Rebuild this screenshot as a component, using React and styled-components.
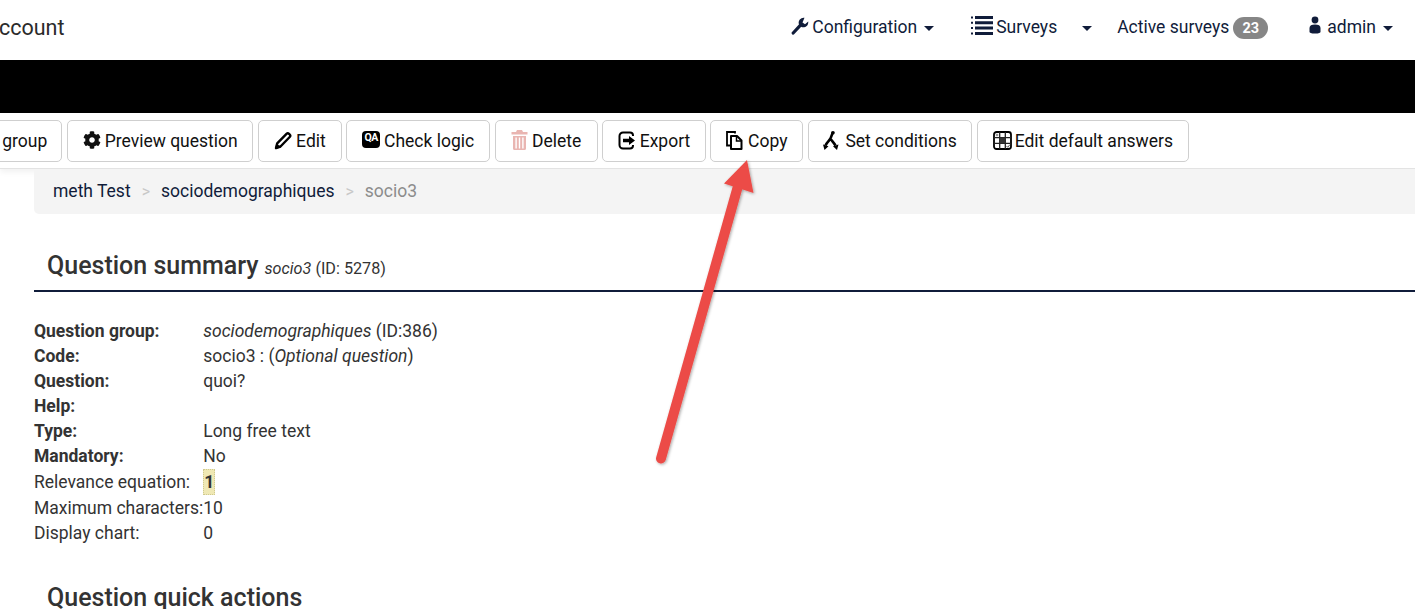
import React from 'react'
import styled, { createGlobalStyle } from 'styled-components'
import { FaCog } from 'react-icons/fa'

const navy = '#101c3a'

const GlobalStyle = createGlobalStyle`
  html, body {
    margin: 0;
    padding: 0;
    background: #fff;
    font-family: Roboto, "Liberation Sans", sans-serif;
  }
`

const Page = styled.div`
  position: relative;
  width: 1415px;
  height: 609px;
  overflow: hidden;
  background: #fff;
`

const TopNav = styled.nav`
  height: 60px;
  box-sizing: border-box;
  padding-bottom: 6px;
  display: flex;
  align-items: center;
  justify-content: space-between;
  color: ${navy};
  font-size: 17.5px;
`

const Brand = styled.div`
  font-size: 21.5px;
  margin-left: -1px;
  color: #2b2b2b;
`

const NavItems = styled.div`
  display: flex;
  align-items: center;
  padding-right: 22px;
`

const NavItem = styled.div`
  display: flex;
  align-items: center;
  margin-left: ${p => p.$gap}px;
  height: 24px;
  svg { flex: none; }
`

const NavIcon = styled.span`
  display: flex;
  margin-right: ${p => p.$gap}px;
  margin-top: ${p => p.$up}px;
`

const Caret = styled.span`
  width: 0;
  height: 0;
  margin-left: ${p => p.$gap || 7}px;
  margin-top: 2px;
  border-left: 5px solid transparent;
  border-right: 5px solid transparent;
  border-top: 5px solid ${navy};
`

const Badge = styled.span`
  margin-left: 4px;
  width: 35px;
  height: 22px;
  margin-top: 2px;
  border-radius: 11px;
  background: #868686;
  color: #fff;
  font-size: 14.5px;
  font-weight: 700;
  display: flex;
  align-items: center;
  justify-content: center;
`

const BlackBar = styled.div`
  height: 53px;
  background: #000;
`

const Toolbar = styled.div`
  height: 56px;
  box-sizing: border-box;
  padding-top: 7px;
  display: flex;
  align-items: flex-start;
  gap: 4.6px;
  border-bottom: 1px solid #e3e3e3;
  box-shadow: 0 3px 6px rgba(0, 0, 0, 0.06);
`

const Button = styled.button`
  height: 42px;
  box-sizing: border-box;
  width: ${p => p.$w}px;
  margin-left: ${p => p.$ml || 0}px;
  flex: none;
  display: flex;
  align-items: center;
  justify-content: ${p => (p.$end ? 'flex-end' : 'center')};
  gap: ${p => p.$gap ?? 4}px;
  padding: 0 ${p => (p.$end ? 14 : 0)}px 0 0;
  background: #fff;
  border: 1px solid #cfcfcf;
  border-radius: 5px;
  color: #111;
  font-family: inherit;
  font-size: 17.5px;
  white-space: nowrap;
  svg { flex: none; margin-top: -2px; }
`

const QaIcon = styled.span`
  width: 18px;
  height: 17px;
  margin-top: -3px;
  border-radius: 4px;
  background: #000;
  color: #fff;
  font-size: 10.500px;
  font-weight: 700;
  letter-spacing: -0.5px;
  line-height: 13px;
  text-align: center;
  flex: none;
`

const Main = styled.main`
  margin-left: 34px;
`

const Breadcrumb = styled.div`
  height: 45px;
  box-sizing: border-box;
  padding: 0 0 1px 19px;
  display: flex;
  align-items: center;
  background: #f4f4f4;
  border-radius: 0 0 0 5px;
  font-size: 17.5px;
  color: ${navy};
`

const Sep = styled.span`
  margin: 0 11px 0 11px;
  color: #c8c8c8;
  font-size: 16px;
`

const Current = styled.span`
  color: #8c8c8c;
`

const Heading = styled.h3`
  margin: ${p => p.$top}px 0 0;
  padding-left: 13px;
  font-size: 25px;
  font-weight: 500;
  line-height: 32px;
  color: #333;
  small {
    margin-left: 6px;
    font-size: 16.2px;
    font-weight: 400;
  }
`

const Rule = styled.div`
  height: 2px;
  margin-top: 5px;
  background: ${navy};
`

const Summary = styled.table`
  margin-top: 27px;
  border-collapse: collapse;
  font-size: 17.5px;
  color: #333;
  td {
    padding: 0;
    height: 25px;
    line-height: 25px;
  }
  i { font-style: italic; }
`

const Row = styled.tr`
  td { height: ${p => (p.$tall ? 26 : 25)}px; }
`

const Label = styled.td`
  font-weight: ${p => (p.$plain ? 400 : 700)};
  white-space: nowrap;
`

const Equation = styled.span`
  display: inline-block;
  box-sizing: border-box;
  width: 12px;
  height: 26px;
  background: #efe8b4;
  border: 1px dotted #cfc98f;
  font-weight: 700;
  text-align: center;
  line-height: 24px;
  vertical-align: middle;
`

const ArrowLayer = styled.svg`
  position: absolute;
  left: 0;
  top: 0;
  pointer-events: none;
`

const WrenchIcon = () => (
  <svg width="18" height="18" viewBox="0 0 18 18">
    <path d="M2.200 16L9.500 8.200" stroke={navy} strokeWidth="3.200" strokeLinecap="round" fill="none" />
    <path d="M13.500 .8A5 5 0 0 0 8 7.500L10.500 10A5 5 0 0 0 17.200 4.600L14 7.200L11.500 5.500z" fill={navy} />
  </svg>
)

const ListIcon = () => (
  <svg width="22" height="19" viewBox="0 0 22 19">
    <path d="M4 0h18v3H4zM4 5.300h18v3H4zM4 10.600h18v3H4zM4 16h18v3H4z" fill={navy} />
    <path d="M0 .5h2v2H0zM0 5.800h2v2H0zM0 11.100h2v2H0zM0 16.500h2v2H0z" fill={navy} />
  </svg>
)

const UserIcon = () => (
  <svg width="14" height="18" viewBox="0 0 14 18">
    <circle cx="7" cy="4" r="3.400" fill={navy} />
    <path d="M1.500 16v-4C1.500 9.500 3.500 8.500 7 8.500s5.500 1 5.500 3.500v4c0 .8-1.500 1.500-5.500 1.500S1.500 16.800 1.500 16z" fill={navy} />
  </svg>
)

const PencilIcon = () => (
  <svg width="18" height="19" viewBox="0 0 18 19">
    <path d="M12.500 2.800a1.800 1.800 0 0 1 2.500 0l.7.7a1.800 1.800 0 0 1 0 2.500L6.500 15.500 2 17l1.200-4.700z" fill="#fff" stroke="#000" strokeWidth="2.400" strokeLinejoin="round" />
    <path d="M1 18l1.500-6 4.500 4.500z" fill="#000" />
  </svg>
)

const TrashIcon = () => (
  <svg width="17" height="20" viewBox="0 0 17 20" fill="#e9b5b1">
    <path d="M6 0h5l1 2h4.500v2.500H.5V2H5z" />
    <path d="M2 6h13v12.500a1.500 1.500 0 0 1-1.500 1.500h-10A1.500 1.500 0 0 1 2 18.500zM4.400 7.500v11h1.400v-11zM7.800 7.500v11h1.400v-11zM11.200 7.500v11h1.400v-11z" fillRule="evenodd" />
  </svg>
)

const ExportIcon = () => (
  <svg width="18" height="19" viewBox="0 0 18 19">
    <path d="M15 5V4.500A3 3 0 0 0 12 1.500H5A3.500 3.500 0 0 0 1.500 5v9A3.500 3.500 0 0 0 5 17.500h7a3 3 0 0 0 3-3V14" fill="none" stroke="#000" strokeWidth="2" />
    <path d="M5 7.800h6V5l6 4.500-6 4.500v-2.800H5z" fill="#000" />
  </svg>
)

const CopyIcon = () => (
  <svg width="17" height="19" viewBox="0 0 17 19">
    <path d="M9 2.500V1H1v13.500h3" fill="none" stroke="#000" strokeWidth="1.800" />
    <path d="M5 5h6l4.500 4.500V18H5z" fill="#fff" stroke="#000" strokeWidth="2" strokeLinejoin="round" />
    <path d="M10.500 5v5h5" fill="none" stroke="#000" strokeWidth="1.500" />
  </svg>
)

const ForkIcon = () => (
  <svg width="16" height="19" viewBox="0 0 16 19">
    <path d="M10 1L7.500 7.500C6 10 4 11 2.500 14.500M8 8.500c1.500 2 3 3.500 4.500 6" fill="none" stroke="#000" strokeWidth="2.600" />
    <circle cx="10" cy="1.800" r="1.800" fill="#000" />
    <path d="M0 13.500l5.500 1.800L1.500 19zM15.500 13.500l-5.500 1.800L14 19z" fill="#000" />
  </svg>
)

const GridIcon = () => (
  <svg width="19" height="19" viewBox="0 0 19 19">
    <rect x="1" y="1" width="17" height="17" rx="2.500" fill="#fff" stroke="#000" strokeWidth="1.800" />
    <path d="M6.700 1v17M12.300 1v17M1 6.700h17M1 12.300h17" stroke="#222" strokeWidth="1.300" />
    <rect x="6.700" y="6.700" width="5.600" height="5.600" fill="#333" />
    <rect x="2.800" y="2.800" width="2.400" height="2.400" fill="#999" />
    <path d="M13.500 15l1.300 1.300 2-2.600" fill="none" stroke="#555" strokeWidth="1" />
  </svg>
)

const Arrow = () => (
  <ArrowLayer width="1415" height="609" viewBox="0 0 1415 609">
    <defs>
      <filter id="arrow-shadow" x="-30%" y="-10%" width="160%" height="120%">
        <feDropShadow dx="1" dy="1" stdDeviation="1.500" floodColor="#000" floodOpacity="0.35" />
      </filter>
    </defs>
    <g filter="url(#arrow-shadow)">
      <path d="M661 458.500L738 186" stroke="#ec4c47" strokeWidth="10" strokeLinecap="round" fill="none" />
      <path d="M747 160L724 183.500L753.500 193z" fill="#ec4c47" />
    </g>
  </ArrowLayer>
)

const rows = [
  ['Question group:', <><i>sociodemographiques</i> (ID:386)</>],
  ['Code:', <>socio3 : (<i>Optional question</i>)</>],
  ['Question:', 'quoi?'],
  ['Help:', ''],
  ['Type:', 'Long free text'],
  ['Mandatory:', 'No'],
  ['Relevance equation:', <Equation>1</Equation>, true, true],
  ['Maximum characters:', '10', true, true],
  ['Display chart:', '0', true],
]

const App = () => {
  return (
    <Page>
      <GlobalStyle />
      <TopNav>
        <Brand>ccount</Brand>
        <NavItems>
          <NavItem $gap={0}>
            <NavIcon $gap={3} $up={-3}><WrenchIcon /></NavIcon>
            Configuration
            <Caret />
          </NavItem>
          <NavItem $gap={37}>
            <NavIcon $gap={3} $up={-4}><ListIcon /></NavIcon>
            Surveys
            <Caret $gap={25} />
          </NavItem>
          <NavItem $gap={25}>
            Active surveys
            <Badge>23</Badge>
          </NavItem>
          <NavItem $gap={40}>
            <NavIcon $gap={5} $up={-5}><UserIcon /></NavIcon>
            admin
            <Caret />
          </NavItem>
        </NavItems>
      </TopNav>
      <BlackBar />
      <Toolbar>
        <Button $ml={-20} $w={82.3} $end>group</Button>
        <Button $w={186.6}><FaCog size={18} />Preview question</Button>
        <Button $w={83.7}><PencilIcon />Edit</Button>
        <Button $w={143.6}><QaIcon>QA</QaIcon>Check logic</Button>
        <Button $w={103}><TrashIcon />Delete</Button>
        <Button $w={103.7}><ExportIcon />Export</Button>
        <Button $w={92.7} $gap={5}><CopyIcon />Copy</Button>
        <Button $w={164.7} $gap={6}><ForkIcon />Set conditions</Button>
        <Button $w={211.7} $gap={3}><GridIcon />Edit default answers</Button>
      </Toolbar>
      <Main>
        <Breadcrumb>
          meth Test
          <Sep>&gt;</Sep>
          sociodemographiques
          <Sep>&gt;</Sep>
          <Current>socio3</Current>
        </Breadcrumb>
        <Heading $top={36}>
          Question summary
          <small><i>socio3</i> (ID: 5278)</small>
        </Heading>
        <Rule />
        <Summary>
          <tbody>
            {rows.map(([label, value, plain, tall]) => (
              <Row key={label} $tall={tall}>
                <Label $plain={plain}>{label}</Label>
                <td>{value}</td>
              </Row>
            ))}
          </tbody>
        </Summary>
        <Heading $top={36}>Question quick actions</Heading>
      </Main>
      <Arrow />
    </Page>
  )
}

export default App
